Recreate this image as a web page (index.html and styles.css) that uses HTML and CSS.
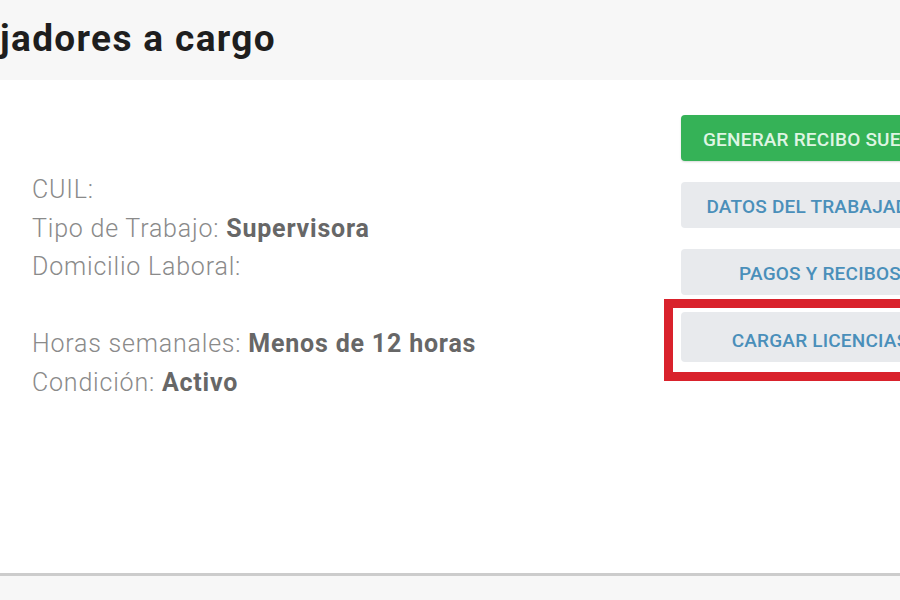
FILE: index.html
```html
<!DOCTYPE html>
<html lang="es">
<head>
<meta charset="utf-8">
<link rel="stylesheet" href="styles.css">
</head>
<body>
<header class="page-head">
  <h1 class="title">jadores a cargo</h1>
</header>
<main class="card">
  <div class="info">
    <p class="row">CUIL:</p>
    <p class="row">Tipo de Trabajo: <b>Supervisora</b></p>
    <p class="row">Domicilio Laboral:</p>
    <p class="row gap"></p>
    <p class="row">Horas semanales: <b>Menos de 12 horas</b></p>
    <p class="row">Condición: <b>Activo</b></p>
  </div>
  <div class="actions">
    <button class="btn btn-green">GENERAR RECIBO SUELDO</button>
    <button class="btn btn-gray">DATOS DEL TRABAJADOR</button>
    <button class="btn btn-gray">PAGOS Y RECIBOS</button>
    <div class="highlight">
      <button class="btn btn-gray btn-tall">CARGAR LICENCIAS</button>
      <span class="mark"></span>
    </div>
  </div>
</main>
<footer class="page-foot"></footer>
</body>
</html>
```

FILE: styles.css
```css
html, body {
  margin: 0;
  padding: 0;
}
body {
  width: 900px;
  height: 600px;
  overflow: hidden;
  background: #f7f7f7;
  font-family: Roboto, "Liberation Sans", sans-serif;
}
.page-head {
  height: 80px;
  background: #f7f7f7;
  box-sizing: border-box;
  padding-top: 15px;
}
.title {
  margin: 0;
  font-size: 37px;
  font-weight: 700;
  color: #1e1e1e;
  line-height: 48px;
  letter-spacing: 1.35px;
}
.card {
  height: 496px;
  background: #fff;
  border-bottom: 3px solid #cccccc;
  display: flex;
  box-sizing: border-box;
  padding: 35px 0 0 32px;
}
.info {
  width: 649px;
  flex: none;
  padding-top: 56px;
}
.row {
  margin: 0;
  font-size: 25px;
  font-weight: 300;
  color: #8a8a8a;
  line-height: 38.5px;
  letter-spacing: 0.8px;
  white-space: nowrap;
}
.row.gap {
  height: 38.5px;
}
.row b {
  font-weight: 700;
  color: #676767;
}
.actions {
  display: flex;
  flex-direction: column;
  width: 278px;
  flex: none;
}
.btn {
  display: block;
  width: 278px;
  height: 46px;
  border: none;
  border-radius: 4px;
  font-family: Roboto, "Liberation Sans", sans-serif;
  font-size: 19px;
  font-weight: 500;
  letter-spacing: 0.2px;
  text-align: center;
  padding: 3px 0 0;
  margin-bottom: 21px;
  white-space: nowrap;
}
.btn-green {
  background: #35b257;
  color: #dff5e3;
  box-shadow: 0 1px 2px rgba(0,0,0,0.15);
}
.btn-gray {
  background: #e8eaed;
  color: #4a8fba;
}
.btn-tall {
  height: 50px;
  padding-top: 6px;
  margin-bottom: 0;
}
.highlight {
  position: relative;
  margin-top: -4px;
}
.mark {
  position: absolute;
  left: -17px;
  top: -13px;
  width: 310px;
  height: 64px;
  border: 9px solid #d9222c;
  pointer-events: none;
}
.page-foot {
  height: 24px;
  background: #f7f7f7;
}
```
